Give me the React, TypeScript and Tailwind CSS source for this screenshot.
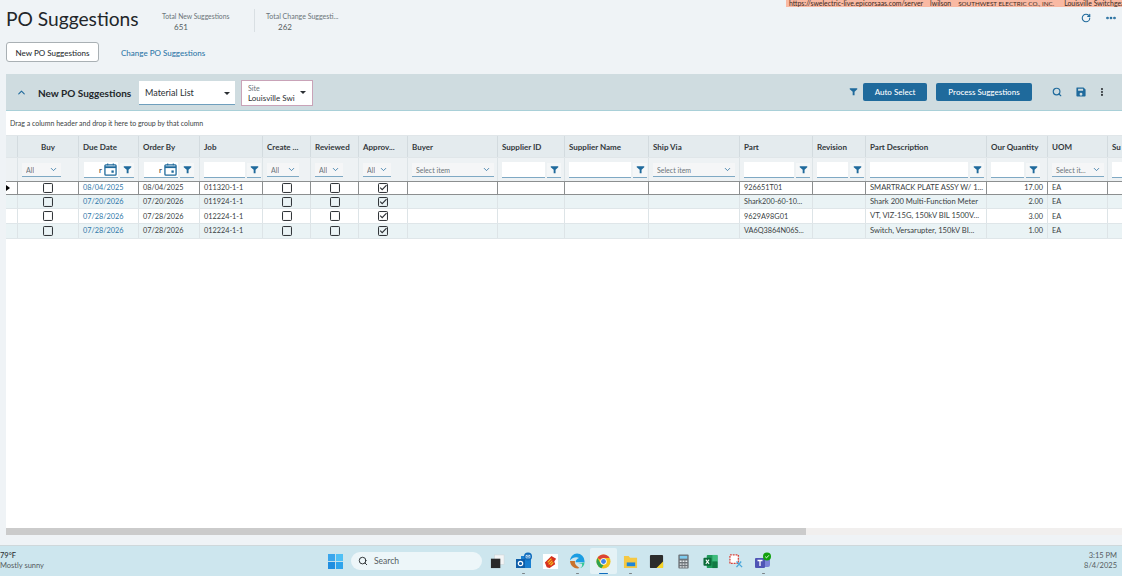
import { ChevronDown, ChevronUp, Search, RotateCw, MoreHorizontal, MoreVertical } from 'lucide-react'

const gridCols =
  'grid grid-cols-[12px_61px_60px_61px_63px_48px_48px_49px_90px_67px_84px_91px_73px_53px_121px_61px_60px_100px]'

type Filter =
  | { kind: 'none' }
  | { kind: 'select'; label: string; w: string }
  | { kind: 'date' }
  | { kind: 'text'; w: string }

const columns: { title: string; center?: boolean; filter: Filter }[] = [
  { title: 'Buy', center: true, filter: { kind: 'select', label: 'All', w: 'w-[39px]' } },
  { title: 'Due Date', filter: { kind: 'date' } },
  { title: 'Order By', filter: { kind: 'date' } },
  { title: 'Job', filter: { kind: 'text', w: 'w-[41px]' } },
  { title: 'Create ...', filter: { kind: 'select', label: 'All', w: 'w-[32px]' } },
  { title: 'Reviewed', filter: { kind: 'select', label: 'All', w: 'w-[28px]' } },
  { title: 'Approv...', filter: { kind: 'select', label: 'All', w: 'w-[28px]' } },
  { title: 'Buyer', filter: { kind: 'select', label: 'Select item', w: 'w-[82px]' } },
  { title: 'Supplier ID', filter: { kind: 'text', w: 'w-[43px]' } },
  { title: 'Supplier Name', filter: { kind: 'text', w: 'w-[62px]' } },
  { title: 'Ship Via', filter: { kind: 'select', label: 'Select item', w: 'w-[82px]' } },
  { title: 'Part', filter: { kind: 'text', w: 'w-[50px]' } },
  { title: 'Revision', filter: { kind: 'text', w: 'w-[31px]' } },
  { title: 'Part Description', filter: { kind: 'text', w: 'w-[98px]' } },
  { title: 'Our Quantity', filter: { kind: 'text', w: 'w-[33px]' } },
  { title: 'UOM', filter: { kind: 'select', label: 'Select it...', w: 'w-[52px]' } },
  { title: 'Su', filter: { kind: 'text', w: 'w-[60px]' } },
]

const rows = [
  { due: '08/04/2025', order: '08/04/2025', job: '011320-1-1', part: '926651T01', desc: 'SMARTRACK PLATE ASSY W/ 1...', qty: '17.00' },
  { due: '07/20/2026', order: '07/20/2026', job: '011924-1-1', part: 'Shark200-60-10...', desc: 'Shark 200 Multi-Function Meter', qty: '2.00' },
  { due: '07/28/2026', order: '07/28/2026', job: '012224-1-1', part: '9629A98G01', desc: 'VT, VIZ-15G, 150kV BIL 1500V...', qty: '3.00' },
  { due: '07/28/2026', order: '07/28/2026', job: '012224-1-1', part: 'VA6Q3864N06S...', desc: 'Switch, Versarupter, 150kV BI...', qty: '1.00' },
]

function FunnelIcon({ className }: { className: string }) {
  return (
    <svg viewBox="0 0 12 12" className={className} fill="currentColor">
      <path d="M1 1.5h10v1.4L7.4 6.4V11H4.9V6.4L1 2.9z" />
    </svg>
  )
}

function FilterBtn() {
  return (
    <div className="flex h-[15px] w-[14px] shrink-0 items-center justify-center border-b border-[#7fa9c4] bg-[#f5f7f8] text-[#1f6a9c]">
      <FunnelIcon className="h-[9px] w-[9px]" />
    </div>
  )
}

function CalendarIcon() {
  return (
    <svg viewBox="0 0 14 14" className="h-[13px] w-[13px] shrink-0 text-[#1f6a9c]" fill="none" stroke="currentColor">
      <rect x="1" y="2" width="12" height="11" rx="1" strokeWidth="1.4" />
      <path d="M1 4.5h12" strokeWidth="2" />
      <path d="M4 .5v2M10 .5v2" strokeWidth="1.2" />
      <rect x="8" y="8" width="2.5" height="2.5" fill="currentColor" stroke="none" />
    </svg>
  )
}

function SaveIcon() {
  return (
    <svg viewBox="0 0 12 12" className="ml-[14px] h-[10px] w-[10px] text-[#1f6a9c]" fill="currentColor">
      <path fillRule="evenodd" d="M1 .5h8L11.5 3v7.5a1 1 0 0 1-1 1h-9a1 1 0 0 1-1-1v-9a1 1 0 0 1 .5-1zM2.5 2v2.5h6V2zM6 7a1.7 1.7 0 1 0 0 3.4A1.7 1.7 0 0 0 6 7z" />
    </svg>
  )
}

function FilterCell({ filter }: { filter: Filter }) {
  if (filter.kind === 'select') {
    return (
      <div className="flex h-full items-center border-r border-[#dde4e7] pl-[4px] pt-[2px]">
        <div className={`flex h-[14px] items-center justify-between border-b border-[#7fa9c4] bg-[#f5f6f7] pl-[4px] pr-[3px] text-[7px] text-[#6b7479] ${filter.w}`}>
          <span className="truncate">{filter.label}</span>
          <ChevronDown className="ml-[1px] h-[9px] w-[9px] shrink-0 text-[#1f6a9c]" />
        </div>
      </div>
    )
  }
  if (filter.kind === 'date') {
    return (
      <div className="flex h-full items-center gap-[2px] border-r border-[#dde4e7] pl-[5px] pt-[2px]">
        <div className="flex h-[16px] w-[34px] items-center justify-end gap-[2px] border-b border-[#7fa9c4] bg-white pr-[1px] text-[8px] text-[#333]">
          <span>r</span>
          <CalendarIcon />
        </div>
        <FilterBtn />
      </div>
    )
  }
  if (filter.kind === 'text') {
    return (
      <div className="flex h-full items-center gap-[2px] border-r border-[#dde4e7] pl-[4px] pt-[2px]">
        <div className={`h-[16px] border-b border-[#7fa9c4] bg-white ${filter.w}`} />
        <FilterBtn />
      </div>
    )
  }
  return null
}

function CheckBox({ checked }: { checked?: boolean }) {
  return (
    <svg viewBox="0 0 11 11" className="h-[10px] w-[10px]" fill="none" stroke="#2b2f33">
      <rect x="0.6" y="0.6" width="9.8" height="9.8" rx="0.8" strokeWidth="1.1" />
      {checked && <path d="M2.4 5.2l2.2 2.2 4.8-5" strokeWidth="1.2" />}
    </svg>
  )
}

function GridRow({ row, index }: { row: (typeof rows)[number]; index: number }) {
  const selected = index === 0
  const bg = index % 2 === 1 ? 'bg-[#eaf3f5]' : 'bg-white'
  const border = selected
    ? 'border-y border-[#8c8f90] h-[14px]'
    : 'border-b border-[#dfe6e9] h-[14.67px]'
  const divider = selected ? 'border-r border-[#8c8f90]' : 'border-r border-[#dde4e7]'
  const text = `flex items-center truncate px-[4px] ${divider}`
  const nums = `${text} text-[7.3px]`
  const box = `flex items-center justify-center ${divider}`
  return (
    <div className={`${gridCols} ${bg} ${border} text-[8px] leading-none text-[#3a3f43]`}>
      <div className={`flex items-center ${divider}`}>
        {selected && <div className="h-0 w-0 border-y-[3px] border-l-[4px] border-y-transparent border-l-black" />}
      </div>
      <div className={box}><CheckBox /></div>
      <div className={`${nums} text-[#2f78a8]`}>{row.due}</div>
      <div className={nums}>{row.order}</div>
      <div className={nums}>{row.job}</div>
      <div className={box}><CheckBox /></div>
      <div className={box}><CheckBox /></div>
      <div className={box}><CheckBox checked /></div>
      <div className={text} />
      <div className={text} />
      <div className={text} />
      <div className={text} />
      <div className={nums}>{row.part}</div>
      <div className={text} />
      <div className={`${text} text-[7.6px]`}>{row.desc}</div>
      <div className={`${nums} justify-end`}>{row.qty}</div>
      <div className={nums}>EA</div>
      <div className={text} />
    </div>
  )
}

function WindowsLogo() {
  return (
    <svg viewBox="0 0 16 16" className="h-[15px] w-[15px]">
      <rect x="0" y="0" width="7.5" height="7.5" fill="#3aa6ec" />
      <rect x="8.5" y="0" width="7.5" height="7.5" fill="#4fc0f5" />
      <rect x="0" y="8.5" width="7.5" height="7.5" fill="#1f8ee0" />
      <rect x="8.5" y="8.5" width="7.5" height="7.5" fill="#2fa4ec" />
    </svg>
  )
}

const taskIcons = [
  // task view
  <svg key="view" viewBox="0 0 16 16" className="h-[15px] w-[15px]">
    <rect x="5" y="1" width="10" height="10" fill="#f3f5f6" stroke="#cfd4d6" strokeWidth="0.6" />
    <rect x="1" y="5" width="10" height="10" fill="#2a2a2a" />
  </svg>,
  // outlook
  <svg key="outlook" viewBox="0 0 18 18" className="h-[18px] w-[18px]">
    <rect x="6" y="4" width="10" height="12" fill="#1a7fd0" />
    <rect x="1" y="7" width="9" height="9" fill="#0f5ea8" />
    <circle cx="5.5" cy="11.5" r="2.2" fill="none" stroke="#fff" strokeWidth="1.2" />
    <circle cx="13" cy="4.5" r="4" fill="#0f6cbd" />
    <path d="M11 3.3h4v2.6h-4zM11 3.3l2 1.5 2-1.5" fill="none" stroke="#fff" strokeWidth="0.6" />
  </svg>,
  // red and yellow app
  <svg key="app" viewBox="0 0 16 16" className="h-[15px] w-[15px]">
    <rect width="16" height="16" fill="#fff" />
    <path d="M2 9l7-7 5 3-2 3 1 3-6 4-3-1z" fill="#d6301f" />
    <path d="M5 9l4-4M6 11l4-4M8 12l3-3" stroke="#f6c21c" strokeWidth="1.3" />
  </svg>,
  // edge
  <svg key="edge" viewBox="0 0 16 16" className="h-[16px] w-[16px]">
    <path d="M8 .5a7.5 7.5 0 0 1 7.5 7.5v1.2H6.5C6.8 6.8 8.5 5.5 10 5 8 3.5 3.5 4 1 7.5 1.5 3.5 4.5.5 8 .5z" fill="#1b9de2" />
    <path d="M15.5 9.2c0 3-2 5.5-4.5 6 2-1 2.5-3 2-4.5H9z" fill="#35c79a" />
    <path d="M1 8h5c-.5 2 .5 4 2 5l2.5 2C7 16.500 1.500 14 1 8z" fill="#c9722c" />
  </svg>,
  // chrome
  <svg key="chrome" viewBox="0 0 16 16" className="h-[15px] w-[15px]">
    <circle cx="8" cy="8" r="7.5" fill="#f2c31a" />
    <path d="M8 .5a7.5 7.5 0 0 1 6.5 3.75H8a3.75 3.75 0 0 0-3.25 1.9L1.5 4.25A7.5 7.5 0 0 1 8 .5z" fill="#dc4437" />
    <path d="M1.5 4.25l3.25 5.6A3.75 3.75 0 0 0 8 11.75l-2.2 3.4A7.5 7.5 0 0 1 1.5 4.25z" fill="#2fa350" />
    <circle cx="8" cy="8" r="3.4" fill="#fff" />
    <circle cx="8" cy="8" r="2.6" fill="#3f83ea" />
  </svg>,
  // file explorer
  <svg key="files" viewBox="0 0 16 16" className="h-[15px] w-[15px]">
    <path d="M1 2h5l1.5 2H15v11H1z" fill="#f5c843" />
    <rect x="4" y="9" width="9" height="4" fill="#1e86d8" />
  </svg>,
  // sticky notes
  <svg key="sticky" viewBox="0 0 16 16" className="h-[15px] w-[15px]">
    <rect x="1" y="1" width="14" height="14" rx="1" fill="#2c2c2c" />
    <path d="M15 8v7H8z" fill="#f5d328" />
  </svg>,
  // calculator
  <svg key="calc" viewBox="0 0 16 16" className="h-[15px] w-[15px]">
    <rect x="2.5" y="0.5" width="11" height="15" rx="1" fill="#6d7378" />
    <rect x="4" y="2" width="8" height="3" fill="#7ecbee" />
    <path d="M4 7h2v1.5H4zM7 7h2v1.5H7zM10 7h2v1.5h-2zM4 10h2v1.5H4zM7 10h2v1.5H7zM10 10h2v1.5h-2zM4 13h2v1.5H4zM7 13h2v1.5H7zM10 13h2v1.5h-2z" fill="#e8ecee" />
  </svg>,
  // excel
  <svg key="excel" viewBox="0 0 16 16" className="h-[15px] w-[15px]">
    <rect x="4" y="1" width="11.5" height="14" rx="1" fill="#1f9a5a" />
    <rect x="10" y="1" width="5.5" height="7" fill="#3dbb7c" />
    <rect x="10" y="8" width="5.5" height="7" fill="#127a43" />
    <rect x="0.5" y="4" width="8.5" height="8.5" rx="1" fill="#0c6b39" />
    <path d="M3 6l3.5 4.5M6.5 6L3 10.5" stroke="#fff" strokeWidth="1.1" />
  </svg>,
  // snipping tool
  <svg key="snip" viewBox="0 0 16 16" className="h-[15px] w-[15px]">
    <rect x="1" y="1" width="9" height="9" fill="#fff" stroke="#d9453b" strokeWidth="1.4" strokeDasharray="2 1" />
    <path d="M8 8l6 6M13 8l-5 6" stroke="#4aa8dc" strokeWidth="1.4" />
  </svg>,
  // teams
  <svg key="teams" viewBox="0 0 18 18" className="h-[18px] w-[18px]">
    <rect x="7" y="6" width="9" height="9" rx="2" fill="#7b83d8" />
    <rect x="1" y="6" width="10" height="10" rx="1" fill="#4f55b5" />
    <path d="M3.5 8.5h5M6 8.500v5.500" stroke="#fff" strokeWidth="1.3" />
    <circle cx="13" cy="4.5" r="4" fill="#13a10e" />
    <path d="M11.2 4.6l1.3 1.3 2.400-2.600" fill="none" stroke="#fff" strokeWidth="0.9" />
  </svg>,
]

export default function App() {
  return (
    <div className="relative flex h-[576px] w-[1122px] flex-col overflow-hidden bg-[#eff3f6] font-['Lato',sans-serif] text-[#2b2f33]">
      {/* environment strip over the page */}
      <div className="absolute right-0 top-0 flex h-[7px] w-[336px] items-center gap-[7px] overflow-hidden whitespace-nowrap bg-[#f9b9a3] pl-[3px] text-[6.9px] leading-[7px] text-[#3a2a24]">
        <span>https://swelectric-live.epicorsaas.com/server</span>
        <span>lwilson</span>
        <span className="text-[6.3px]">SOUTHWEST ELECTRIC CO., INC.</span>
        <span className="ml-[3px]">Louisville Switchgear</span>
      </div>

      {/* page title */}
      <div className="flex h-[42px] shrink-0 items-start pl-[6px]">
        <h1 className="mt-[4px] w-[156px] text-[19.2px] leading-[30px] text-[#22262a]">PO Suggestions</h1>
        <div className="mt-[11px] w-[92px] text-[6.8px] leading-[10px] text-[#6b7479]">
          <div>Total New Suggestions</div>
          <div className="ml-[12px] mt-[1px] text-[8px] text-[#555c61]">651</div>
        </div>
        <div className="mt-[9px] h-[23px] w-px bg-[#d9dfe3]" />
        <div className="ml-[11px] mt-[11px] w-[90px] text-[7px] leading-[10px] text-[#6b7479]">
          <div className="whitespace-nowrap">Total Change Suggesti...</div>
          <div className="ml-[12px] mt-[1px] text-[8px] text-[#555c61]">262</div>
        </div>
        <div className="ml-auto mr-[5px] mt-[12px] flex items-center gap-[14px] text-[#1f6a9c]">
          <RotateCw className="h-[10px] w-[10px]" strokeWidth={2.6} />
          <MoreHorizontal className="h-[12px] w-[12px]" strokeWidth={3.4} />
        </div>
      </div>

      {/* tabs */}
      <div className="flex h-[32px] shrink-0 items-start pl-[6px]">
        <div className="flex h-[20px] w-[93px] items-center justify-center rounded-[3px] border border-[#a9b0b4] bg-white pt-px text-[8px] font-medium text-[#2b2f33]">
          New PO Suggestions
        </div>
        <div className="ml-[22px] flex h-[20px] items-center pt-px text-[8px] font-medium text-[#2f78a8]">Change PO Suggestions</div>
      </div>

      {/* panel */}
      <div className="ml-[6px] flex min-h-0 flex-1 flex-col overflow-hidden">
        <div className="flex h-[37px] shrink-0 items-center border-b border-[#a9d0d8] bg-[#cfdce0] pt-px">
          <ChevronUp className="ml-[10px] h-[11px] w-[11px] text-[#1f6a9c]" strokeWidth={2.4} />
          <span className="ml-[11px] w-[101px] whitespace-nowrap pt-px text-[10px] font-bold text-[#22262a]">New PO Suggestions</span>
          <div className="flex h-[24px] w-[96px] items-center justify-between border-b border-[#6f9fbd] bg-white pl-[6px] pr-[5px] pt-[2px] text-[9px] text-[#2b2f33]">
            Material List
            <div className="h-0 w-0 border-x-[3.5px] border-t-[3.5px] border-x-transparent border-t-[#2b2f33]" />
          </div>
          <div className="ml-[6px] flex h-[26px] w-[72px] items-center justify-between border border-[#c9a3b8] bg-white pl-[6px] pr-[6px]">
            <div className="overflow-hidden whitespace-nowrap text-[8px] leading-[10px]">
              <div className="text-[7px] text-[#6b7479]">Site</div>
              <div className="w-[49px]">Louisville Swi</div>
            </div>
            <div className="h-0 w-0 shrink-0 border-x-[3.5px] border-t-[3.5px] border-x-transparent border-t-[#2b2f33]" />
          </div>
          <div className="mb-[2px] ml-auto flex items-center">
            <FunnelIcon className="h-[9px] w-[9px] text-[#1f6a9c]" />
            <div className="ml-[5px] flex h-[18px] w-[64px] items-center justify-center rounded-[2px] bg-[#1f6a9c] text-[8px] font-medium text-white">Auto Select</div>
            <div className="ml-[9px] flex h-[18px] w-[96px] items-center justify-center rounded-[2px] bg-[#1f6a9c] text-[8px] font-medium text-white">Process Suggestions</div>
            <Search className="ml-[20px] h-[10px] w-[10px] text-[#1f6a9c]" strokeWidth={2.8} />
            <SaveIcon />
            <MoreVertical className="ml-[11px] mr-[15px] h-[10px] w-[10px] text-[#2b2f33]" strokeWidth={3.2} />
          </div>
        </div>

        <div className="flex min-h-0 flex-1 flex-col bg-white">
          <div className="flex h-[24px] shrink-0 items-center pl-[4px] pt-px text-[7px] text-[#3a3f43]">
            Drag a column header and drop it here to group by that column
          </div>

          <div className={`${gridCols} h-[23px] shrink-0 border-y border-[#e0e6e9] bg-[#e4ebee] text-[8px] font-bold text-[#33383c]`}>
            <div className="border-r border-[#d3dbdf]" />
            {columns.map((col) => (
              <div
                key={col.title}
                className={`flex items-center overflow-hidden whitespace-nowrap border-r border-[#d3dbdf] px-[4px] pt-px ${col.center ? 'justify-center' : ''}`}
              >
                {col.title}
              </div>
            ))}
          </div>

          <div className={`${gridCols} h-[22.7px] shrink-0 bg-[#eef2f4]`}>
            <div className="border-r border-[#dde4e7]" />
            {columns.map((col) => (
              <FilterCell key={col.title} filter={col.filter} />
            ))}
          </div>

          <div>
            {rows.map((row, i) => (
              <GridRow key={i} row={row} index={i} />
            ))}
          </div>

          <div className="flex-1" />

          <div className="flex h-[7px] shrink-0 bg-[#f1efee]">
            <div className="w-[800px] bg-[#cbcbcb]" />
          </div>
        </div>
      </div>

      <div className="h-[11px] shrink-0 border-b border-[#cfd8db] bg-[#eff3f6]" />

      {/* windows taskbar */}
      <div className="flex h-[30px] shrink-0 items-center bg-[#cde6ee]">
        <div className="w-[328px] text-[7.5px] leading-[10px]">
          <div className="font-medium text-[#2b2f33]">79°F</div>
          <div className="text-[#555c61]">Mostly sunny</div>
        </div>
        <WindowsLogo />
        <div className="ml-[8px] flex h-[18px] w-[131px] items-center rounded-full bg-[#edf6f9] pl-[7px] text-[8.5px] text-[#555c61]">
          <Search className="h-[10px] w-[10px] text-[#22262a]" strokeWidth={2.2} />
          <span className="ml-[6px]">Search</span>
        </div>
        <div className="ml-[2px] flex items-center">
          {taskIcons.map((icon, i) => (
            <div
              key={i}
              className={`relative flex h-[26px] w-[26.6px] items-center justify-center rounded-[2px] ${i === 4 ? 'bg-[#e4f2f6]' : ''}`}
            >
              {icon}
              {i === 4 && <div className="absolute bottom-0 h-[1.5px] w-[9px] rounded bg-[#0f6cbd]" />}
              {[1, 3, 5, 10].includes(i) && <div className="absolute bottom-0 h-[1.5px] w-[3px] rounded bg-[#7b8387]" />}
            </div>
          ))}
        </div>
        <div className="ml-auto mr-[5px] text-right text-[7.5px] leading-[10px] text-[#555c61]">
          <div>3:15 PM</div>
          <div>8/4/2025</div>
        </div>
      </div>
    </div>
  )
}
